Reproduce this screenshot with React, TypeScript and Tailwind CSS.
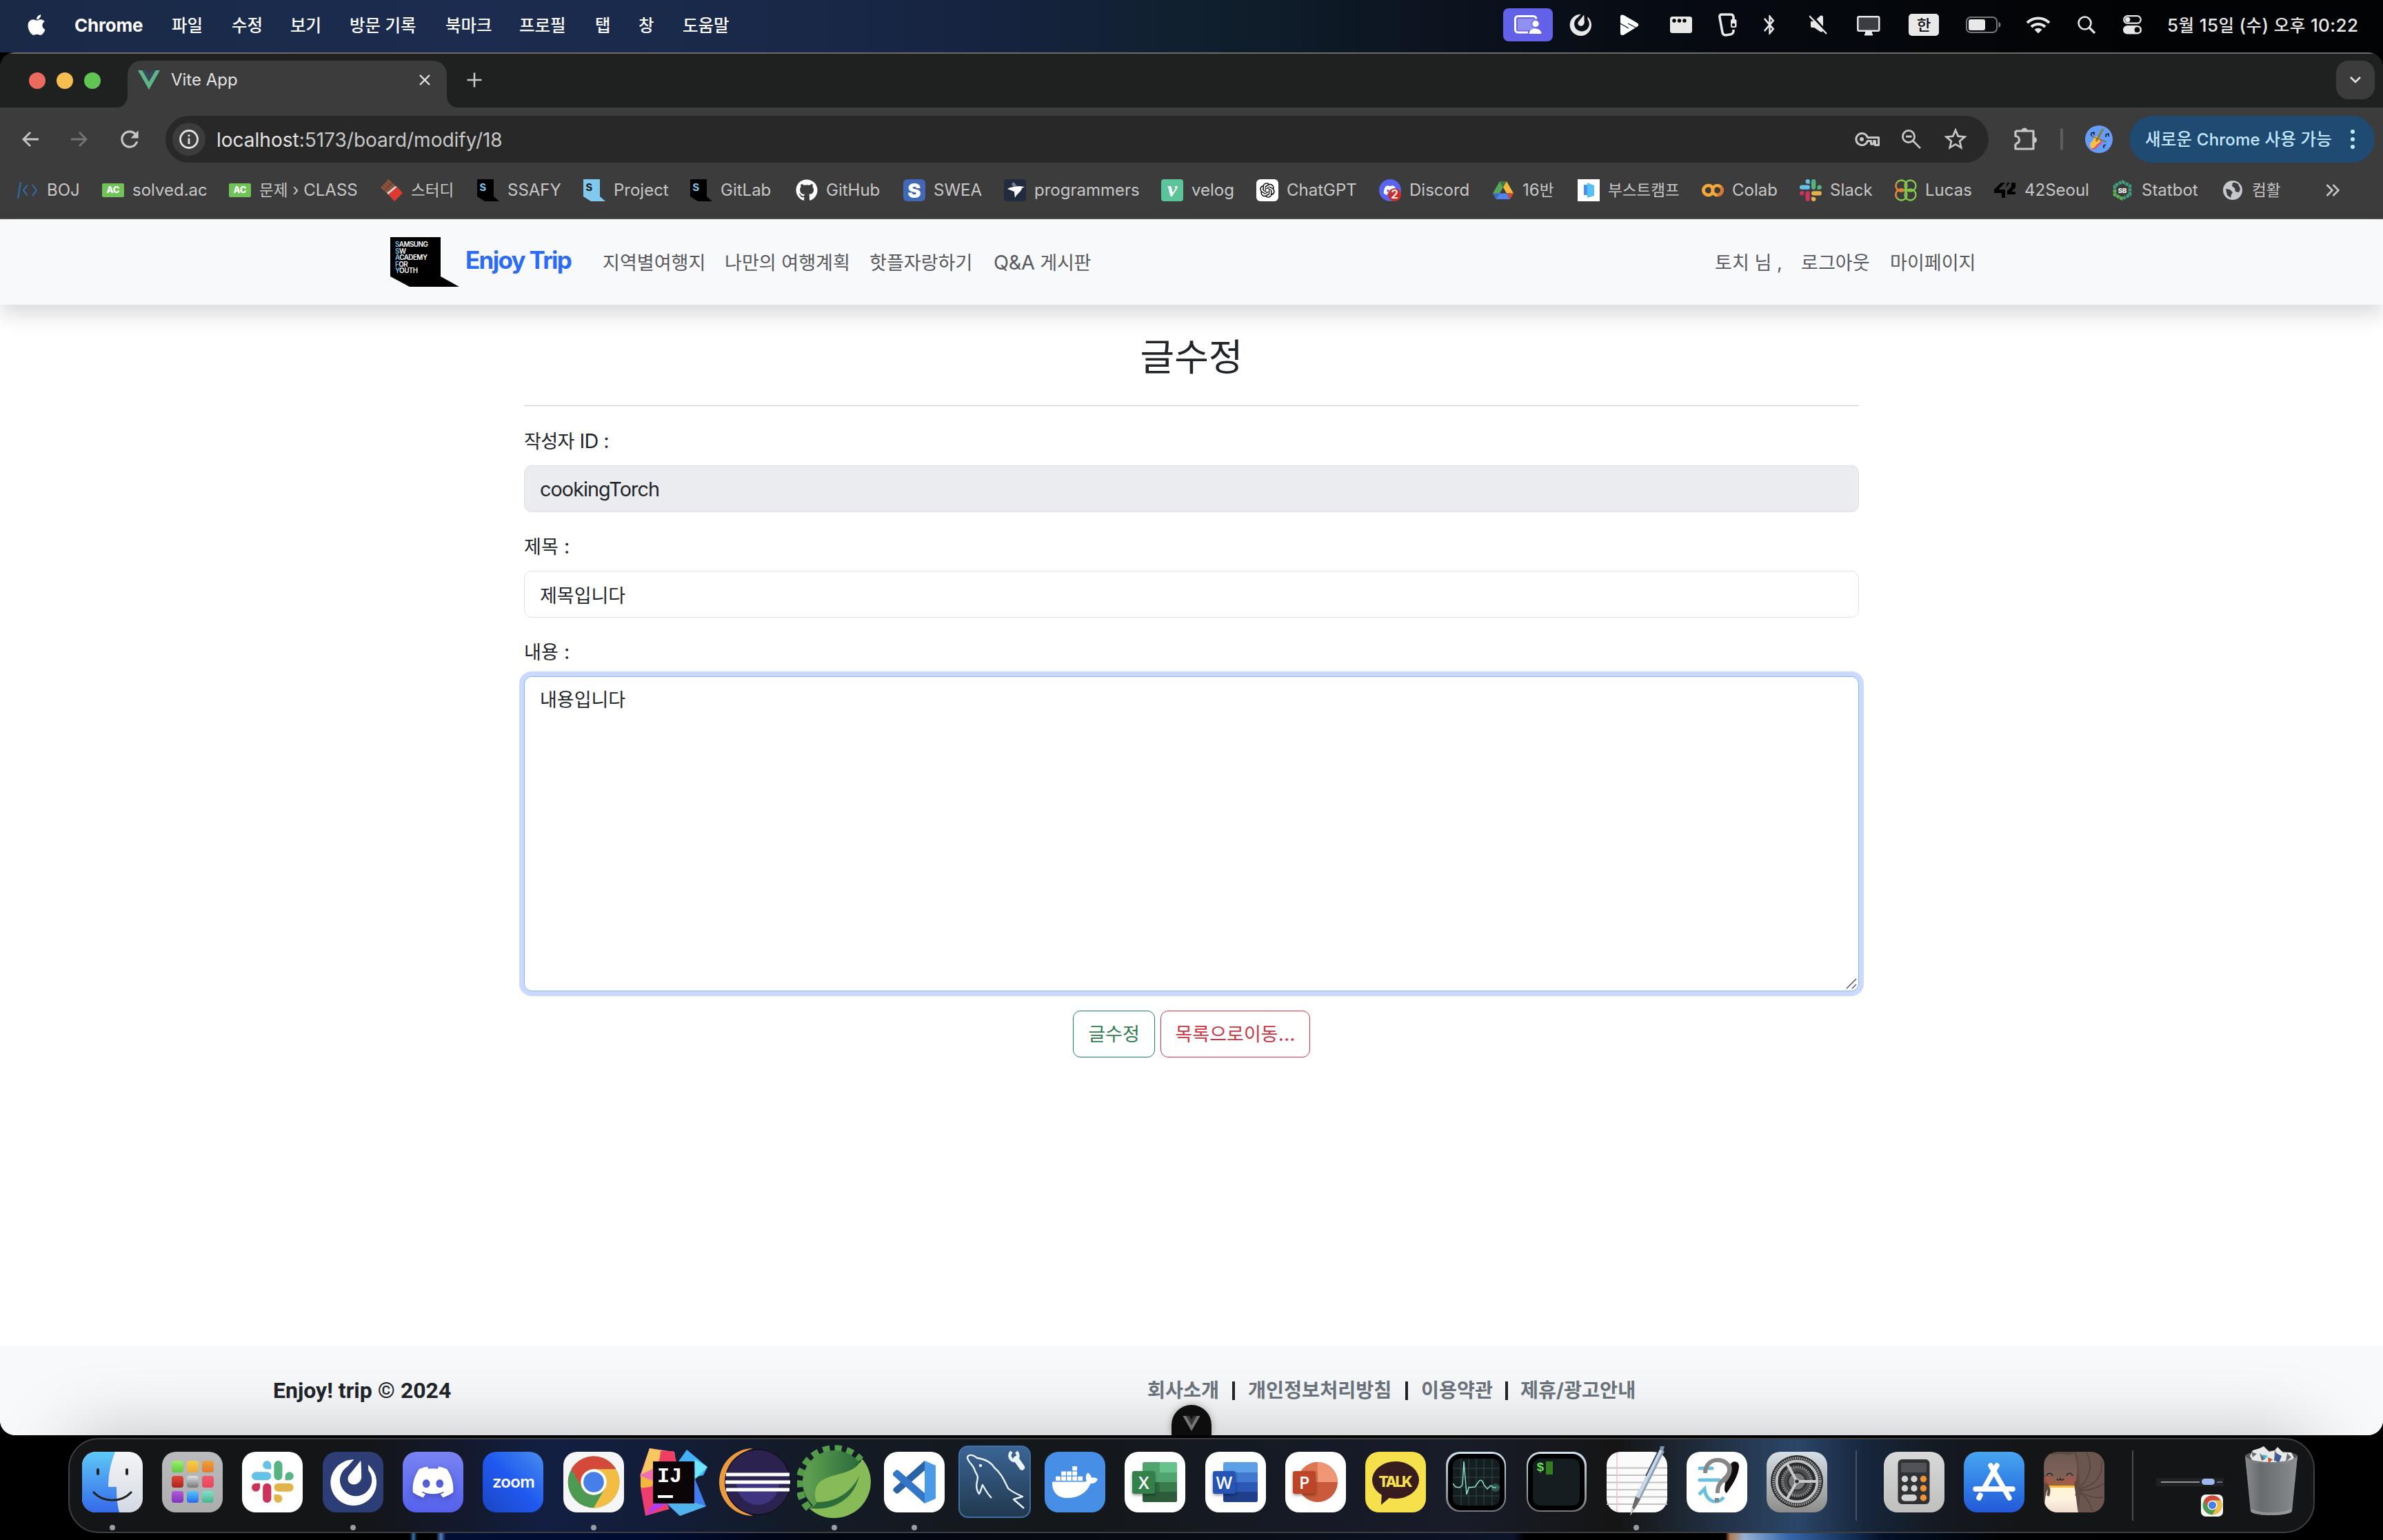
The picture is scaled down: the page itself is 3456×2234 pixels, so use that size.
import React from "react";
import type { ReactNode } from "react";
import { FaApple, FaDiscord, FaDocker, FaGithub } from "react-icons/fa6";
import { RiOpenaiFill } from "react-icons/ri";
import { MdBluetooth, MdStarBorder, MdRefresh } from "react-icons/md";

/* Korean text is set slightly smaller than the Latin text around it. */
function K({ children }: { children: ReactNode }) {
  return <span className="text-[0.94em]">{children}</span>;
}

/* ---------- shared logos ---------- */

function VueLogo({ className, outer, inner }: { className: string; outer: string; inner: string }) {
  return (
    <svg viewBox="0 0 32 28" className={className}>
      <path d="M0 0h6.4L16 16.6 25.6 0H32L16 28z" fill={outer} />
      <path d="M6.4 0h5.9L16 6.4 19.7 0h5.9L16 16.6z" fill={inner} />
    </svg>
  );
}

function SlackLogo({ className }: { className: string }) {
  return (
    <svg viewBox="0 0 54 54" className={className}>
      <path fill="#64c1e8" d="M19.7.1a5.4 5.4 0 0 0-5.4 5.4 5.4 5.4 0 0 0 5.4 5.3h5.4V5.5A5.4 5.4 0 0 0 19.7.1m0 14.3H5.4A5.4 5.4 0 0 0 0 19.8a5.4 5.4 0 0 0 5.4 5.3h14.3a5.4 5.4 0 0 0 5.4-5.3 5.4 5.4 0 0 0-5.4-5.4" />
      <path fill="#58b382" d="M53.8 19.8a5.4 5.4 0 0 0-5.4-5.4 5.4 5.4 0 0 0-5.4 5.4v5.3h5.4a5.4 5.4 0 0 0 5.4-5.3m-14.4 0V5.5A5.4 5.4 0 0 0 34 .1a5.4 5.4 0 0 0-5.3 5.4v14.3a5.4 5.4 0 0 0 5.3 5.3 5.4 5.4 0 0 0 5.4-5.3" />
      <path fill="#e1b34c" d="M34 54a5.4 5.4 0 0 0 5.4-5.4 5.4 5.4 0 0 0-5.4-5.3h-5.3v5.3A5.4 5.4 0 0 0 34 54m0-14.3h14.4a5.4 5.4 0 0 0 5.4-5.4 5.4 5.4 0 0 0-5.4-5.4H34a5.4 5.4 0 0 0-5.3 5.4 5.4 5.4 0 0 0 5.3 5.4" />
      <path fill="#cd325a" d="M0 34.3a5.4 5.4 0 0 0 5.4 5.4 5.4 5.4 0 0 0 5.3-5.4v-5.4H5.4A5.4 5.4 0 0 0 0 34.3m14.3 0v14.3a5.4 5.4 0 0 0 5.4 5.4 5.4 5.4 0 0 0 5.4-5.4V34.3a5.4 5.4 0 0 0-5.4-5.4 5.4 5.4 0 0 0-5.4 5.4" />
    </svg>
  );
}

function ChromeLogo({ className }: { className: string }) {
  return (
    <svg viewBox="0 0 100 100" className={className}>
      <circle cx="50" cy="50" r="48" fill="#4f9a52" />
      <path d="M8.4 26A48 48 0 0 1 91.6 26L50 26 29.2 62z" fill="#d4493a" />
      <path d="M91.6 26A48 48 0 0 1 50 98L70.8 62 50 26z" fill="#f2bd42" />
      <circle cx="50" cy="50" r="24" fill="#fff" />
      <circle cx="50" cy="50" r="19" fill="#467fea" />
    </svg>
  );
}

function Mattermost({ className, color }: { className: string; color: string }) {
  return (
    <svg viewBox="0 0 100 100" className={className} fill={color}>
      <path d="M52 2A49 49 0 1 0 82 13L83 25A34 34 0 1 1 38 17z" />
      <path d="M65 6C64 4 66 4 67 7L68 38C68 52 54 58 46 54 36 49 38 38 44 32z" />
    </svg>
  );
}

/* ---------- macOS menu bar ---------- */

function MenuBar() {
  return (
    <div className="flex h-[76px] shrink-0 items-center bg-[linear-gradient(90deg,#1a2946_0%,#1b2c50_20%,#192847_34%,#15233f_42%,#10202e_50%,#0c1420_60%,#070b12_70%,#020304_90%)] pb-[4px] pl-[40px] text-[26px] font-medium text-white">
      <div className="flex w-[2140px] items-center">
        <div className="w-[68px]"><FaApple className="-ml-1 h-[34px] w-[34px]" /></div>
        <div className="w-[141px] font-bold tracking-[-0.2px]">Chrome</div>
        <div className="w-[87px]"><K>파일</K></div>
        <div className="w-[85px]"><K>수정</K></div>
        <div className="w-[86px]"><K>보기</K></div>
        <div className="w-[139px]"><K>방문 기록</K></div>
        <div className="w-[107px]"><K>북마크</K></div>
        <div className="w-[110px]"><K>프로필</K></div>
        <div className="w-[63px]"><K>탭</K></div>
        <div className="w-[64px]"><K>창</K></div>
        <div><K>도움말</K></div>
      </div>
      <div className="flex items-center text-[#e8e8e8]">
        <div className="w-[96px]">
          <div className="flex h-[48px] w-[72px] items-center justify-center rounded-[8px] bg-[#6261e8]">
            <svg viewBox="0 0 40 28" className="h-[28px] w-[40px]">
              <rect x="5" y="5" width="26" height="17" fill="#918ff0" />
              <path d="M20 25H5.500a4 4 0 0 1-4-4V5.500a4 4 0 0 1 4-4H28a4 4 0 0 1 4 4" fill="none" stroke="#fff" strokeWidth="3" />
              <circle cx="31" cy="12.500" r="5.500" fill="#fff" stroke="#6261e8" strokeWidth="1.500" />
              <path d="M21.500 27c0-10 18-10 18 0z" fill="#fff" />
            </svg>
          </div>
        </div>
        <div className="w-[71px]"><Mattermost className="h-[32px] w-[32px]" color="#e8e8e8" /></div>
        <div className="w-[75px]">
          <svg viewBox="0 0 30 30" className="h-[30px] w-[30px]">
            <path d="M3 3c0-3 3-3 5-2l19 11c3 2 3 4 0 6L9 29c-3 2-6 1-6-2z" fill="#fff" />
            <path d="M-1 11l16 9M14 13l15 8" stroke="#0b101a" strokeWidth="1.200" />
          </svg>
        </div>
        <div className="w-[70px]">
          <svg viewBox="0 0 32 24" className="h-[24px] w-[32px]">
            <rect width="32" height="24" rx="3.500" fill="#e8e8e8" />
            <circle cx="6" cy="6" r="2.700" /><circle cx="13.500" cy="6" r="2.700" /><circle cx="21" cy="6" r="2.700" />
          </svg>
        </div>
        <div className="w-[60px]">
          <svg viewBox="0 0 28 34" className="h-[34px] w-[28px]">
            <path d="M22 9V6c0-3-2-4-4-4H5C3 2 1.500 3 2 6l4 22c.5 3 2 4 5 4l6-1c4-1 5-2 5-5v-2" fill="none" stroke="#e8e8e8" strokeWidth="3.600" />
            <rect x="18" y="9" width="8.500" height="12" rx="2" fill="#e8e8e8" />
            <circle cx="22" cy="17" r="2.300" fill="#06090e" />
          </svg>
        </div>
        <div className="w-[72px]"><MdBluetooth className="h-[34px] w-[29px]" preserveAspectRatio="none" /></div>
        <div className="w-[69px]">
          <svg viewBox="0 0 26 28" className="h-[28px] w-[26px]">
            <path d="M2 9h5l9-8c2-1 4 0 4 2v18c0 3-2 4-4 3l-9-6H4c-2 0-2-1-2-3z" fill="#e8e8e8" />
            <path d="M2-1l24 26" stroke="#06090e" strokeWidth="3" />
            <path d="M0 1l25 26" stroke="#e8e8e8" strokeWidth="2.300" />
          </svg>
        </div>
        <div className="w-[75px]">
          <svg viewBox="0 0 34 29" className="mt-[2px] h-[29px] w-[34px]">
            <rect x="1.300" y="1.300" width="31" height="20.500" rx="2" fill="#3b3d42" stroke="#e8e8e8" strokeWidth="2.500" />
            <path d="M12 23h10v3h1v2.500H11V26h1z" fill="#e8e8e8" />
          </svg>
        </div>
        <div className="w-[83px]">
          <div className="flex h-[32px] w-[44px] items-center justify-center rounded-[5px] bg-[#e8e8e8] text-[22px] leading-none text-[#07090c]">한</div>
        </div>
        <div className="w-[87px]">
          <svg viewBox="0 0 51 24" className="h-[24px] w-[51px]">
            <rect x="1" y="1" width="44" height="22" rx="6" fill="none" stroke="#77797c" strokeWidth="2" />
            <rect x="4" y="4" width="24" height="16" rx="3" fill="#e8e8e8" />
            <path d="M47.500 8c4 1 4 7 0 8z" fill="#77797c" />
          </svg>
        </div>
        <div className="w-[75px]">
          <svg viewBox="0 0 36 26" className="h-[26px] w-[36px]" fill="none" stroke="#e8e8e8" strokeWidth="4">
            <path d="M2 10a23 23 0 0 1 32 0" /><path d="M8 16a14.500 14.500 0 0 1 20 0" />
            <path d="M18 25.500l-5.500-5.500a8 8 0 0 1 11 0z" fill="#e8e8e8" stroke="none" />
          </svg>
        </div>
        <div className="w-[66px]">
          <svg viewBox="0 0 26 26" className="h-[26px] w-[26px]" fill="none" stroke="#e8e8e8" strokeWidth="2.600">
            <circle cx="10.500" cy="10.500" r="9" /><path d="M17 17l8 8" strokeWidth="3.200" />
          </svg>
        </div>
        <div className="w-[64px]">
          <svg viewBox="0 0 27 28" className="h-[28px] w-[27px]">
            <rect x="1.200" y="1.200" width="24.500" height="10.500" rx="5.250" fill="none" stroke="#e8e8e8" strokeWidth="2.200" />
            <circle cx="6.700" cy="6.400" r="3.600" fill="#e8e8e8" />
            <rect y="15" width="27" height="12.500" rx="6.250" fill="#e8e8e8" />
            <circle cx="20.500" cy="21.200" r="3.900" fill="#050608" />
          </svg>
        </div>
        <div className="tracking-[0.4px] whitespace-nowrap">5<K>월</K> 15<K>일</K> (<K>수</K>) <K>오후</K> 10:22</div>
      </div>
    </div>
  );
}

/* ---------- Chrome window ---------- */

function TabStrip() {
  return (
    <div className="flex h-[80px] shrink-0 border-t-2 border-[#6b6b6b] bg-[#1f2120]">
      <div className="flex w-[169px] items-center gap-[16px] pl-[42px]">
        <div className="h-[24px] w-[24px] rounded-full bg-[#ed6a5e]" />
        <div className="h-[24px] w-[24px] rounded-full bg-[#f4bf4f]" />
        <div className="h-[24px] w-[24px] rounded-full bg-[#61c554]" />
      </div>
      <div className="flex w-[495px] items-end pt-[10px]">
        <svg viewBox="0 0 16 16" className="h-[16px] w-[16px]"><path d="M16 0v16H0A16 16 0 0 0 16 0" fill="#3c3c3c" /></svg>
        <div className="flex h-[68px] w-[463px] items-center rounded-t-[20px] bg-[#3c3c3c] pb-[12px] pl-[15px] text-[24px] text-[#e3e3e3]">
          <VueLogo className="h-[28px] w-[32px]" outer="#5fb488" inner="#35495e" />
          <span className="ml-[16px] flex-1">Vite App</span>
          <svg viewBox="0 0 16 16" className="mr-[24px] h-[16px] w-[16px]" stroke="#e3e3e3" strokeWidth="2.400"><path d="M1 1l14 14M15 1L1 15" /></svg>
        </div>
        <svg viewBox="0 0 16 16" className="h-[16px] w-[16px]"><path d="M0 0v16h16A16 16 0 0 1 0 0" fill="#3c3c3c" /></svg>
      </div>
      <div className="flex flex-1 items-center pb-[2px] pl-[13px]">
        <svg viewBox="0 0 22 22" className="h-[22px] w-[22px]" stroke="#c7c7c7" strokeWidth="2.600"><path d="M11 0.500v21M0.500 11h21" /></svg>
      </div>
      <div className="mt-[10px] mr-[12px] flex h-[56px] w-[56px] items-center justify-center rounded-[18px] bg-[#3c3c3c]">
        <svg viewBox="0 0 16 10" className="h-[10px] w-[16px]" fill="none" stroke="#e3e3e3" strokeWidth="2.600"><path d="M1 1l7 7 7-7" /></svg>
      </div>
    </div>
  );
}

function Toolbar() {
  return (
    <div className="flex h-[92px] shrink-0 items-center pl-[32px] text-[#c7c7c7]">
      <svg viewBox="0 0 24 22" className="h-[22px] w-[24px]" fill="none" stroke="#c7c7c7" strokeWidth="2.800"><path d="M24 11H2M12 1L2 11l10 10" /></svg>
      <svg viewBox="0 0 24 22" className="ml-[47px] h-[22px] w-[24px]" fill="none" stroke="#757575" strokeWidth="2.800"><path d="M0 11h22M12 1l10 10-10 10" /></svg>
      <MdRefresh className="ml-[42px] h-[38px] w-[38px]" />
      <div className="ml-[33px] flex h-[68px] w-[2644px] items-center rounded-full bg-[#282828] pl-[10px]">
        <div className="flex h-[48px] w-[48px] items-center justify-center rounded-full bg-[#3c3c3c]">
          <svg viewBox="0 0 28 28" className="h-[28px] w-[28px]">
            <circle cx="14" cy="14" r="12.500" fill="none" stroke="#e3e3e3" strokeWidth="2.800" />
            <path d="M12.600 12.500h2.800V21h-2.800zM12.600 7.300h2.800v2.800h-2.800z" fill="#e3e3e3" />
          </svg>
        </div>
        <div className="ml-[16px] flex-1 pt-px text-[28px]"><span className="text-[#e3e3e3]">localhost</span>:5173/board/modify/18</div>
        <svg viewBox="0 0 36 20" className="h-[20px] w-[36px]" fill="none" stroke="#c7c7c7" strokeWidth="3">
          <path d="M18.500 7.500A8.500 8.500 0 1 0 18.500 12.500H23.500V17H27.500V12.500H29.500V18.500H34.500V7.500z" strokeLinejoin="round" /><circle cx="10" cy="10" r="3" fill="#c7c7c7" stroke="none" />
        </svg>
        <svg viewBox="0 0 28 28" className="ml-[32px] h-[28px] w-[28px]" fill="none" stroke="#c7c7c7" strokeWidth="2.800">
          <circle cx="10" cy="10" r="8.600" /><path d="M16.500 16.500l10.500 10.500M6 10h8.500" />
        </svg>
        <MdStarBorder className="mr-[28px] ml-[30px] h-[40px] w-[40px]" />
      </div>
      <svg viewBox="0 0 34 34" className="ml-[37px] h-[34px] w-[34px]">
        <path d="M2 5H28V31H2V23.500M2 5V12.500A5.500 5.500 0 0 1 2 23.500" fill="none" stroke="#c7c7c7" strokeWidth="3.200" strokeLinejoin="round" />
        <path d="M10.500 5a4.600 4.600 0 0 1 9.200 0zM28.500 13.500a4.600 4.600 0 0 1 0 9.200z" fill="#c7c7c7" />
      </svg>
      <div className="ml-[33px] h-[32px] w-[4px] rounded bg-[#5e5e5e]" />
      <svg viewBox="0 0 40 40" className="ml-[32px] h-[40px] w-[40px]">
        <circle cx="20" cy="20" r="20" fill="#669df6" />
        <path d="M9 33c-4-5 1-8 3-10s1-6 5-6 8 5 7 8-4 3-6 6-5 6-9 2z" fill="#e0506a" />
        <path d="M8 32c-3-5 1-8 3-10s1-6 5-6 7 4 6 7-4 3-6 6-5 6-8 3z" fill="#f3c14b" />
        <path d="M16 23L26 5" stroke="#9a7420" strokeWidth="2.600" />
        <path d="M8 15l23 9" stroke="#6c5a30" strokeWidth="1.200" />
        <path d="M9 15v-4l4-1v4M30 17v-4l4-1v4M27 33v-4l3-1" stroke="#10182c" strokeWidth="1.500" fill="none" />
      </svg>
      <div className="ml-[24px] flex h-[68px] w-[356px] items-center rounded-full bg-[#1f4a72] pl-[23px] text-[24px] font-medium text-[#c2e7ff]">
        <span className="w-[298px] tracking-[0.2px] whitespace-nowrap"><span className="text-[24.5px]">새로운</span> Chrome <span className="text-[24.5px]">사용 가능</span></span>
        <svg viewBox="0 0 6 28" className="h-[28px] w-[6px]" fill="#c2e7ff"><circle cx="3" cy="3" r="3" /><circle cx="3" cy="14" r="3" /><circle cx="3" cy="25" r="3" /></svg>
      </div>
    </div>
  );
}

function Bookmark({ width, icon, children }: { width: string; icon: ReactNode; children: ReactNode }) {
  return (
    <div className={`flex shrink-0 items-center gap-[12px] whitespace-nowrap ${width}`}>
      <span className="flex h-[32px] w-[32px] shrink-0 items-center justify-center">{icon}</span>
      <span>{children}</span>
    </div>
  );
}

function SFlag({ fill, ink }: { fill: string; ink: string }) {
  return (
    <svg viewBox="0 0 32 32" className="h-[32px] w-[32px]">
      <path d="M0 0h24v25l8 7H11L0 25z" fill={fill} />
      <text x="3.500" y="17" fontFamily="Liberation Mono" fontSize="16" fontWeight="700" fill={ink}>S</text>
    </svg>
  );
}

function SolvedIcon() {
  return <span className="flex h-[20px] w-[32px] items-center justify-center rounded-[2px] bg-[#72c25a] text-[13px] font-extrabold text-white">AC</span>;
}

function BookmarksBar() {
  return (
    <div className="flex h-[70px] shrink-0 items-center border-b-2 border-[#4b4b4b] pb-[12px] pl-[24px] text-[24px] text-[#c7c7c7]">
      <Bookmark width="w-[124px]" icon={
        <svg viewBox="0 0 32 28" className="h-[28px] w-[32px]" fill="none" stroke="#2f6db5" strokeWidth="2"><path d="M6 2L2 26M16 6l-6 8 6 8M23 6l6 8-6 8" /></svg>
      }>BOJ</Bookmark>
      <Bookmark width="w-[184px]" icon={<SolvedIcon />}>solved.ac</Bookmark>
      <Bookmark width="w-[220px]" icon={<SolvedIcon />}><K>문제</K> › CLASS</Bookmark>
      <Bookmark width="w-[140px]" icon={
        <svg viewBox="0 0 32 32" className="h-[32px] w-[32px]">
          <path d="M11 0L0 12l10 9L22 10z" fill="#8c5641" />
          <path d="M5.500 6l11 9.500M3 9l10.500 9M8 3l11 9M5 17L17 5" stroke="#5f3426" strokeWidth="1" />
          <path d="M9 20L21 10l3 1L12 23z" fill="#d8d8d8" />
          <path d="M11 22L24 11l8 9L20 32z" fill="#dc3a30" />
        </svg>
      }><K>스터디</K></Bookmark>
      <Bookmark width="w-[154px]" icon={<SFlag fill="#000" ink="#7fc9ee" />}>SSAFY</Bookmark>
      <Bookmark width="w-[155px]" icon={<SFlag fill="#82c9ee" ink="#111" />}>Project</Bookmark>
      <Bookmark width="w-[153px]" icon={<SFlag fill="#000" ink="#7fc9ee" />}>GitLab</Bookmark>
      <Bookmark width="w-[156px]" icon={<FaGithub className="h-[32px] w-[32px] text-white" />}>GitHub</Bookmark>
      <Bookmark width="w-[146px]" icon={
        <span className="flex h-[32px] w-[32px] items-center justify-center rounded-[6px] bg-[#4169b8] text-[29px] leading-none font-black text-white">S</span>
      }>SWEA</Bookmark>
      <Bookmark width="w-[228px]" icon={
        <svg viewBox="0 0 32 32" className="h-[32px] w-[32px]">
          <rect width="32" height="32" rx="4" fill="#212b3d" />
          <path d="M11 7l3-3 6 7-5 2z" fill="#73809a" />
          <path d="M5 14c4-3 12-3 17-4l8 1-4 2c-1 6-6 6-10 14l-1-9z" fill="#fff" />
        </svg>
      }>programmers</Bookmark>
      <Bookmark width="w-[138px]" icon={
        <span className="flex h-[32px] w-[32px] items-center justify-center rounded-[4px] bg-[#5cc39a] pb-[4px] font-['Liberation_Serif'] text-[32px] leading-none font-bold text-white italic">v</span>
      }>velog</Bookmark>
      <Bookmark width="w-[178px]" icon={
        <span className="flex h-[32px] w-[32px] items-center justify-center rounded-[6px] bg-white"><RiOpenaiFill className="h-[26px] w-[26px] text-black" /></span>
      }>ChatGPT</Bookmark>
      <Bookmark width="w-[164px]" icon={
        <span className="relative flex h-[32px] w-[32px] items-center justify-center rounded-full bg-[#5865f2]">
          <FaDiscord className="h-[20px] w-[20px] text-white" />
          <span className="absolute right-0 bottom-0 flex h-[19px] w-[19px] items-center justify-center rounded-full bg-[#c9302c] text-[17px] leading-none font-semibold text-white">2</span>
        </span>
      }>Discord</Bookmark>
      <Bookmark width="w-[124px]" icon={
        <svg viewBox="0 0 30 26" className="h-[26px] w-[30px]">
          <path d="M10 0L0 17.500 5 26 15 8.700z" fill="#58a65c" /><path d="M10 0h10l-5 8.700z" fill="#397d3f" />
          <path d="M20 0l10 17.500H20L15 8.700z" fill="#f2b93b" /><path d="M5 26l5-8.500h10L25 26z" fill="#5083ee" />
          <path d="M0 17.500h10L5 26z" fill="#3f68cf" /><path d="M20 17.500h10L25 26z" fill="#dc4437" />
        </svg>
      }>16<K>반</K></Bookmark>
      <Bookmark width="w-[180px]" icon={
        <svg viewBox="0 0 32 32" className="h-[32px] w-[32px]"><path d="M0 0h32v32H0z" fill="#fff" /><path d="M9 8h8v15H9z" fill="#4a90f5" /><path d="M14 5l10 4v15l-10 3z" fill="#55c1f7" /></svg>
      }><K>부스트캠프</K></Bookmark>
      <Bookmark width="w-[142px]" icon={
        <svg viewBox="0 0 32 20" className="h-[20px] w-[32px]" fill="none" strokeWidth="4.600">
          <circle cx="9.500" cy="10" r="7" stroke="#d9782c" /><path d="M15.500 6.400A7 7 0 1 0 15.500 13.600" stroke="#f2a93b" />
          <circle cx="22.500" cy="10" r="7" stroke="#f2a93b" /><path d="M22.500 17A7 7 0 0 0 27.500 5" stroke="#d9782c" />
        </svg>
      }>Colab</Bookmark>
      <Bookmark width="w-[138px]" icon={<SlackLogo className="h-[32px] w-[32px]" />}>Slack</Bookmark>
      <Bookmark width="w-[144px]" icon={
        <svg viewBox="0 0 32 32" className="h-[32px] w-[32px]" fill="none" stroke="#84ca4b" strokeWidth="2.300">
          <circle cx="9.500" cy="9.500" r="8" /><circle cx="22.500" cy="9.500" r="8" /><circle cx="9.500" cy="22.500" r="8" /><circle cx="22.500" cy="22.500" r="8" />
          <path d="M3 5a8 8 0 0 0 6.500 12.500c4 0 4-3 0-3A8 8 0 0 0 3 27.500" stroke="#e8793a" />
        </svg>
      }>Lucas</Bookmark>
      <Bookmark width="w-[170px]" icon={
        <svg viewBox="0 0 32 22" className="h-[22px] w-[32px]"><path d="M10 0h6L6 10h10v12h-5v-7H0v-5zM19 0l-2 7 6-7zM25 0h6v7l-6 6h6v4H19v-5l6-6z" fill="#000" /></svg>
      }>42Seoul</Bookmark>
      <Bookmark width="w-[160px]" icon={
        <svg viewBox="0 0 28 30" className="h-[30px] w-[28px]">
          <path d="M14 2.500l11 6v13l-11 6-11-6v-13z" fill="none" stroke="#3f9e80" strokeWidth="4.500" strokeDasharray="4.400 1" />
          <path d="M3 14v7.500l11 6" fill="none" stroke="#63b04f" strokeWidth="4.500" strokeDasharray="4.400 1" />
          <text x="14" y="18.500" textAnchor="middle" fontFamily="Inter" fontSize="9.500" fontWeight="800" fill="#fff">SB</text>
        </svg>
      }>Statbot</Bookmark>
      <Bookmark width="w-[151px]" icon={
        <svg viewBox="0 0 28 28" className="h-[28px] w-[28px]"><circle cx="14" cy="14" r="14" fill="#c4c7cc" /><path d="M4 12l6 1 4 4-2 3-1 5-5-4zM14 3l-1 5 4 3 1 5 5 1 2-5-3-7-4-2z" fill="#3c3c3c" /></svg>
      }><K>컴활</K></Bookmark>
      <svg viewBox="0 0 20 18" className="h-[18px] w-[20px]" fill="none" stroke="#c7c7c7" strokeWidth="2.600"><path d="M1.500 1l8 8-8 8M10.500 1l8 8-8 8" /></svg>
    </div>
  );
}

/* ---------- the web page ---------- */

function SiteHeader() {
  return (
    <header className="relative flex h-[124px] shrink-0 items-center bg-[#f8f9fb] pl-[566px] text-[28.8px] text-[#57595e] shadow-[0_14px_29px_rgba(0,0,0,0.15)]">
      <svg viewBox="0 0 100 72" className="h-[72px] w-[100px]">
        <path d="M0 0h73v57l27 15H28L0 57z" fill="#000" />
        <g fontFamily="Inter" fontSize="9.800" fontWeight="600" fill="#fff" letterSpacing="-0.500">
          <text x="7" y="14"><tspan fill="#7fc9ee">S</tspan>AMSUNG</text>
          <text x="7" y="23.500"><tspan fill="#7fc9ee">S</tspan>W</text>
          <text x="7" y="33"><tspan fill="#7fc9ee">A</tspan>CADEMY</text>
          <text x="7" y="42.500"><tspan fill="#7fc9ee">F</tspan>OR</text>
          <text x="7" y="52"><tspan fill="#7fc9ee">Y</tspan>OUTH</text>
        </g>
      </svg>
      <div className="ml-[9px] w-[199px] pb-[5px] text-[35px] font-bold tracking-[-1.700px] text-[#2b6bf6]">Enjoy Trip</div>
      <nav className="flex flex-1 pt-[2px]">
        <a className="w-[177px]"><K>지역별여행지</K></a>
        <a className="w-[210px]"><K>나만의 여행계획</K></a>
        <a className="w-[180px]"><K>핫플자랑하기</K></a>
        <a className="tracking-[-0.300px]">Q&amp;A <K>게시판</K></a>
      </nav>
      <nav className="flex w-[969px] pt-[2px]">
        <span className="w-[125px]"><K>토치 님 ,</K></span>
        <a className="w-[129px]"><K>로그아웃</K></a>
        <a><K>마이페이지</K></a>
      </nav>
    </header>
  );
}

function ModifyForm() {
  return (
    <main className="mx-auto flex w-[1936px] flex-1 flex-col text-[28.8px] text-[#212529]">
      <h2 className="mt-[44px] h-[65px] text-center text-[54px] leading-[65px] font-normal">글수정</h2>
      <hr className="mt-[37px] mb-px h-px border-0 bg-[#c8c9ca]" />
      <label className="mt-[28px] h-[43px] leading-[44px] tracking-[-0.600px]"><K>작성자</K> ID :</label>
      <input readOnly value="cookingTorch" className="mt-[14px] h-[68px] rounded-[11px] border border-[#dee2e6] bg-[#ebecf0] px-[22px] tracking-[-0.950px]" />
      <label className="mt-[28px] h-[43px] leading-[44px]"><K>제목</K> :</label>
      <input readOnly value="제목입니다" className="mt-[14px] h-[68px] rounded-[11px] border border-[#dee2e6] bg-white px-[22px] text-[27px]" />
      <label className="mt-[28px] h-[43px] leading-[44px]"><K>내용</K> :</label>
      <div className="relative mt-[14px] h-[457px]">
        <textarea readOnly value="내용입니다" className="block h-full w-full resize-none rounded-[11px] border border-[#86b7fe] bg-white px-[22px] pt-[12px] text-[27px] leading-[43px] shadow-[0_0_0_7px_#cad9fd]" />
        <svg viewBox="0 0 16 16" className="absolute right-[3px] bottom-[3px] h-[16px] w-[16px]" stroke="#555" strokeWidth="1.500"><path d="M1 15L15 1M9 15l6-6" /></svg>
      </div>
      <div className="mt-[28px] flex justify-center gap-[8px]">
        <button className="h-[68px] w-[119px] rounded-[11px] border border-[#198754] text-[#2f7d50]"><K>글수정</K></button>
        <button className="h-[68px] w-[217px] rounded-[11px] border border-[#dc3545] whitespace-nowrap text-[#d0343f]"><K>목록으로이동</K>...</button>
      </div>
    </main>
  );
}

function SiteFooter() {
  return (
    <footer className="relative flex h-[130px] shrink-0 items-center bg-[#f8f9fb] pl-[396px] text-[28.300px] font-bold text-[#6c757d]">
      <div className="w-[1268px] font-['Roboto'] text-[32px] text-[#212529]">Enjoy! trip © 2024</div>
      <span className="w-[123px]">회사소개</span>
      <i className="mr-[19px] h-[27px] w-[4px] bg-[#212529]" />
      <span className="w-[228px]">개인정보처리방침</span>
      <i className="mr-[19px] h-[27px] w-[4px] bg-[#212529]" />
      <span className="w-[122px]">이용약관</span>
      <i className="mr-[18px] h-[27px] w-[4px] bg-[#212529]" />
      <span>제휴/광고안내</span>
      <div className="absolute bottom-0 left-[1699px] flex h-[44px] w-[58px] justify-center rounded-t-[29px] bg-[#0f0f0f] pt-[16px] shadow-[0_0_12px_rgba(0,0,0,0.3)]">
        <VueLogo className="h-[22px] w-[26px]" outer="#808080" inner="#3c3c3c" />
      </div>
    </footer>
  );
}

/* ---------- dock ---------- */

function Tile({ className, children }: { className: string; children?: ReactNode }) {
  return <div className={`flex h-[88px] w-[88px] items-center justify-center overflow-hidden rounded-[20px] ${className}`}>{children}</div>;
}

function Slot({ running, children }: { running?: boolean; children: ReactNode }) {
  return (
    <div className="relative flex h-full w-[116.360px] shrink-0 items-center justify-center pb-[11px]">
      {children}
      {running && <span className="absolute bottom-[2px] left-[54px] h-[8px] w-[8px] rounded-full bg-[#9a9ca3]" />}
    </div>
  );
}

function Finder() {
  return (
    <svg viewBox="0 0 88 88" className="h-full w-full">
      <defs>
        <linearGradient id="finderBlue" x2="0" y2="1"><stop stopColor="#5ec8f7" /><stop offset="1" stopColor="#3569ea" /></linearGradient>
        <linearGradient id="finderWhite" x2="0" y2="1"><stop stopColor="#f5f5f7" /><stop offset="1" stopColor="#d3d9e4" /></linearGradient>
      </defs>
      <path d="M0 0h88v88H0z" fill="url(#finderWhite)" />
      <path d="M0 0h48C41 18 38 34 38 51h12c0 14 1 26 4 37H0z" fill="url(#finderBlue)" />
      <path d="M23 26v6M65 26v6" stroke="#222" strokeWidth="4" strokeLinecap="round" />
      <path d="M17 59c14 15 40 15 54 0" fill="none" stroke="#222" strokeWidth="3.200" strokeLinecap="round" />
    </svg>
  );
}

function Launchpad() {
  const cells = [
    "from-[#9af06a] to-[#5fc93f]", "from-[#f6cf45] to-[#efa93a]", "from-[#f0a139] to-[#e07a30]",
    "from-[#e2483a] to-[#a9251b]", "from-[#dfe1e3] to-[#777]", "from-[#ef5a6e] to-[#e6475b]",
    "from-[#b457dc] to-[#7b36b8]", "from-[#54c6f8] to-[#2d67ea]", "from-[#7fe0cd] to-[#4bb287]",
  ];
  return (
    <div className="grid grid-cols-3 gap-[5px]">
      {cells.map((c) => <div key={c} className={`h-[17px] w-[17px] rounded-[4px] bg-linear-to-b ${c}`} />)}
    </div>
  );
}

function IntelliJ() {
  return (
    <svg viewBox="0 0 98 98" className="h-[98px] w-[98px]">
      <path d="M14 0l36 5 8 50-40 5L0 40z" fill="#f06fb0" /><path d="M14 0l18 3-8 24L2 38z" fill="#f7c860" /><path d="M30 4h18l10 30-30-8z" fill="#ee3f63" />
      <path d="M68 2l30 25-6 12-40 10 4-30z" fill="#45b0f5" /><path d="M98 27L78 40l18 44-38 14-22-20 40-48z" fill="#3f7df0" />
      <path d="M80 16l18 11-18 18z" fill="#6fe6fb" /><path d="M1 40l20 8-12 20-8-12z" fill="#f4b63f" /><path d="M1 58l26-4 16 34-35 10z" fill="#ee3d6f" />
      <path d="M8 98l28-16 8-8-20 0z" fill="#b13cf0" /><path d="M40 80l18-8 38 12-38 14z" fill="#4fb4ec" />
      <path d="M19 19h60v61H19z" fill="#0b0507" />
      <text x="25" y="49" fontFamily="Liberation Mono" fontSize="30" fontWeight="700" fill="#fff">IJ</text>
      <path d="M26 68h22v4H26z" fill="#fff" />
    </svg>
  );
}

function Eclipse() {
  return (
    <svg viewBox="0 0 107 98" className="h-[98px] w-[107px]">
      <path d="M52 0A49 49 0 0 0 52 98C25 88 14 70 14 49S25 10 52 0z" fill="#ea9a3f" />
      <circle cx="59" cy="49" r="48" fill="#10101a" /><circle cx="59" cy="49" r="46.500" fill="#2b2250" />
      <path d="M28 60a31 31 0 0 0 62 0z" fill="#453a8c" opacity=".8" transform="translate(0 -9)" />
      <path d="M13 35.500h92v5H13zM12 46.500h94v5H12zM13 57.500h92v5H13z" fill="#fff" />
    </svg>
  );
}

function Spring() {
  return (
    <svg viewBox="0 0 108 108" className="h-[108px] w-[108px]">
      <defs><linearGradient id="springDark"><stop offset=".1" stopColor="#5d9e50" /><stop offset=".9" stopColor="#2a6a3c" /></linearGradient></defs>
      <path d="M17 92A49 49 0 1 1 92 22" fill="none" stroke="#549a4b" strokeWidth="11" strokeDasharray="10 7" />
      <circle cx="54" cy="54" r="46" fill="url(#springDark)" />
      <path d="M94 20C82 50 36 36 27 64c-2 8-1 15 2 19l-11 9A53 53 0 0 0 107 54C107 41 102 29 94 20z" fill="#87bb57" />
      <path d="M29 83C55 84 80 68 90 45 92 78 60 98 18 92c3-1 8-5 11-9z" fill="#2c6d39" />
      <path d="M18 92c8 1 18 1 26-1 22-5 40-20 46-46 6 30-10 55-38 61-14 0-26-6-34-14z" fill="#87bb57" />
    </svg>
  );
}

function VsCode() {
  return (
    <svg viewBox="0 0 62 62" className="h-[62px] w-[62px]">
      <path d="M0 43l4 4c1 1 2 1 4 0l38-33V0L1 40z" fill="#2a62a6" />
      <path d="M0 18l4-4c1-1 2-1 4 0l38 33v15L0 21z" fill="#3376c8" />
      <path d="M46 0l16 7v48l-16 7z" fill="#4a9ae8" />
    </svg>
  );
}

function MySql() {
  return (
    <div className="h-[105px] w-[105px] rounded-[14px] border-2 border-[#3f6fa5] bg-linear-to-b from-[#3b6594] to-[#22394f]">
      <svg viewBox="2 2 101 101" className="h-full w-full" fill="none" stroke="#e9f4fc" strokeWidth="2.400" strokeLinejoin="round">
        <path d="M95 91L80 78l13-4C84 70 76 66 72 62 66 50 62 40 52 32 46 22 34 19 27 18 20 12 13 13 13 18c2 7 8 10 10 16 2 8 7 8 4 18-2 8 0 14 3 18 2-2 3-8 5-13 3 5 6 12 13 19" />
        <circle cx="32" cy="29" r="1" />
        <path d="M82 21l12 9" strokeWidth="8" strokeLinecap="round" transform="rotate(18 88 25)" />
        <path d="M77 9c-5 5-2 12 4 13 6-1 7-8 3-13" strokeWidth="4.500" />
      </svg>
    </div>
  );
}

function OfficeMark({ letter, badge, children }: { letter: string; badge: string; children: ReactNode }) {
  return (
    <div className="relative h-[58px] w-[66px]">
      {children}
      <span className={`absolute top-[13px] left-0 flex h-[33px] w-[33px] items-center justify-center rounded-[3px] font-['Open_Sans'] text-[25px] leading-none font-semibold text-white shadow-[0_2px_4px_rgba(0,0,0,0.4)] ${badge}`}>{letter}</span>
    </div>
  );
}

function Screen({ children }: { children: ReactNode }) {
  return (
    <div className="flex h-[87px] w-[87px] items-center justify-center rounded-[20px] bg-linear-to-b from-[#cfe3ee] to-[#77797b] p-[2.500px]">
      <div className="flex h-full w-full items-center justify-center rounded-[18px] bg-black">
        <div className="h-[68px] w-[68px] overflow-hidden rounded-[10px] bg-[#141d1f]">{children}</div>
      </div>
    </div>
  );
}

function TextEdit() {
  return (
    <svg viewBox="0 0 88 104" className="h-[104px] w-[88px]">
      <rect y="8" width="88" height="88" rx="20" fill="#fbfbfb" />
      <path d="M0 31.500h88M0 42h88M0 52.500h88M0 63h88M0 73.500h88M0 84h88" stroke="#c2c2c2" strokeWidth="1.800" />
      <path d="M15 9v86" stroke="#f3c0bd" strokeWidth="1.500" />
      <path d="M77 5l7 2-35 70-9 15-5 8 2-11 5-16z" fill="#8fa0b4" />
      <path d="M77 5l4 1-34 69-5-2z" fill="#c7d8e8" />
      <path d="M78-1l6 1-2 7-5-2z" fill="#7d95b5" />
      <path d="M74 9L57 43" stroke="#3e5068" strokeWidth="2" />
      <path d="M42 73l7 4-9 15-3-3z" fill="#6c6866" /><path d="M37 89l3 3-6 9z" fill="#c9c9c9" />
    </svg>
  );
}

function HelpPen() {
  return (
    <svg viewBox="0 0 88 88" className="h-full w-full" fill="none">
      <path d="M19 24h18M19 41h28" stroke="#6bbfdc" strokeWidth="5" strokeLinecap="round" />
      <path d="M18 62l8-8c2 18 18 24 28 12" stroke="#6bbfdc" strokeWidth="5" />
      <path d="M27 31C27 5 62 8 62 26c0 14-18 14-17 34M44 67v6" stroke="#868686" strokeWidth="6" />
      <path d="M63 20c3-9 14-7 13 2-1 12-8 24-18 38-4-2-3-8-2-14 3-6 5-16 7-26z" fill="#120c0d" />
      <path d="M62 18c4 10-2 20-8 26" stroke="#868686" strokeWidth="5" />
    </svg>
  );
}

function Gear() {
  return (
    <svg viewBox="0 0 88 88" className="h-full w-full" fill="none">
      <circle cx="44" cy="43" r="38" fill="#2b2c2e" /><circle cx="44" cy="43" r="34" stroke="#9c9e9f" strokeWidth="3.500" strokeDasharray="1.800 1.400" />
      <circle cx="44" cy="43" r="29.500" stroke="#bfc1c2" strokeWidth="4" /><circle cx="44" cy="43" r="21" fill="#4c4e50" stroke="#8b8d8e" strokeWidth="4" strokeDasharray="1.800 1.400" />
      <circle cx="44" cy="43" r="13" fill="#77797a" stroke="#333436" strokeWidth="3" />
      <path d="M44 43h29M44 43L30 18M44 43L30 68" stroke="#c9cbcc" strokeWidth="4" /><circle cx="44" cy="43" r="3.500" fill="#2d2e30" stroke="#c9cbcc" strokeWidth="1.500" />
    </svg>
  );
}

function Calculator() {
  const keys = ["#d2d3d3", "#d2d3d3", "#f09433"];
  return (
    <svg viewBox="0 0 88 88" className="h-full w-full">
      <rect x="20.500" y="11" width="46" height="65" rx="6" fill="#303236" /><rect x="25" y="16" width="37" height="14" rx="2" fill="#515357" />
      {[39.500, 53].map((y) => keys.map((k, i) => <circle key={`${y}-${i}`} cx={30.500 + i * 13.500} cy={y} r="4.700" fill={k} />))}
      <rect x="25.500" y="62" width="22.500" height="9.500" rx="4.700" fill="#d2d3d3" /><circle cx="57.500" cy="66.700" r="4.700" fill="#f09433" />
    </svg>
  );
}

function Squirrel() {
  return (
    <svg viewBox="0 0 88 88" className="h-full w-full">
      <defs>
        <linearGradient id="belly" x2="0" y2="1"><stop stopColor="#fff6cf" /><stop offset=".5" stopColor="#fdf3e0" /><stop offset="1" stopColor="#f0dccb" /></linearGradient>
        <linearGradient id="face" x2="0" y2="1"><stop stopColor="#6e5a53" /><stop offset=".7" stopColor="#7e6258" /><stop offset="1" stopColor="#a5613f" /></linearGradient>
      </defs>
      <path d="M0 0h88v88H0z" fill="#5f4a44" />
      <path d="M48 0h30c8 4 10 12 10 20v48c-2 12-8 18-14 20H50C56 60 50 30 48 0z" fill="#6b564f" />
      <path d="M62 0c8 18 8 34-10 52M84 14c2 20-8 34-32 40M87 46c-12 8-22 10-35 10M86 66c-12 2-24-2-34-8M70 86c-2-12-8-20-18-26" fill="none" stroke="#54403a" strokeWidth="1.400" />
      <path d="M2 4l6-2 4 3c8-3 18-2 24 0l8-3c6 14 6 34 0 48H8C-2 36 0 16 2 4z" fill="url(#face)" />
      <ellipse cx="7" cy="41" rx="8" ry="6" fill="#b05a48" opacity=".55" /><ellipse cx="38" cy="41" rx="8" ry="6" fill="#b05a48" opacity=".55" />
      <path d="M4 35c2-5 7-5 9 0M33 35c2-5 7-5 9 0M19 39c1 3 4 3 5 0 1 3 4 3 5 0" fill="none" stroke="#35231f" strokeWidth="1.600" />
      <path d="M8 49h36c2 6 4 30 6 39H2c-2-12 0-28 6-39z" fill="url(#belly)" /><path d="M8 49h36l1 3H7z" fill="#f8bd3c" />
      <path d="M3 52c4-4 6 4 3 12M45 46c5-4 6 10 2 18" stroke="#5e4840" strokeWidth="4" fill="none" />
    </svg>
  );
}

function Trash() {
  return (
    <svg viewBox="0 0 78 102" className="h-[102px] w-[78px]">
      <defs><linearGradient id="bin"><stop stopColor="#8b8e90" /><stop offset=".3" stopColor="#6a6d70" /><stop offset=".75" stopColor="#7f8284" /><stop offset="1" stopColor="#8f9294" /></linearGradient></defs>
      <path d="M1 14C5 4 73 4 77 14l-8 80c-2 8-58 8-60 0z" fill="#55585a" />
      <path d="M8 14l4-8 10-3 6-3 8 8 8-2 4-5 8 8 12 0 4 8-10 8H14z" fill="#e9e9ea" />
      <path d="M10 8l8 3-6 5zM22 10l9 8-6 3zM44 6l6 8-7 8zM62 10l6 6-8 6z" fill="#6b6e73" /><path d="M46 10l8 4-4 10-7-4z" fill="#3c5a93" />
      <path d="M26 12l8 2-5 5z" fill="#3fb8e0" /><path d="M34 16l7 3-6 6z" fill="#c9552c" />
      <path d="M1 14c8 12 68 12 76 0l-8 80c-2 8-58 8-60 0z" fill="url(#bin)" opacity=".95" />
      <path d="M10 90c8 8 50 8 58 0l0 4c-3 8-55 8-58 0z" fill="#a5a8aa" opacity=".6" />
    </svg>
  );
}

function Dock() {
  return (
    <div className="relative mx-auto flex h-[138px] w-[3258px] items-center rounded-[44px] border-2 border-[#3d3f43] bg-[linear-gradient(90deg,#141517_0%,#141517_13%,#131a30_18%,#121f42_21%,#131d38_26%,#131b26_33%,#14181a_44%,#161a26_56%,#181c28_62%,#151515_69%,#263a54_75%,#2b4668_77%,#16263c_80%,#141a22_83%,#141517_87%,#141517_100%)] pl-[3.500px] shadow-[0_0_110px_rgba(0,0,0,0.25)]">
      <Slot running><Tile className=""><Finder /></Tile></Slot>
      <Slot><Tile className="bg-linear-to-b from-[#b9bbbc] to-[#adadae]"><Launchpad /></Tile></Slot>
      <Slot><Tile className="bg-white"><SlackLogo className="h-[61px] w-[61px]" /></Tile></Slot>
      <Slot running><Tile className="bg-[#2c3e75]"><Mattermost className="h-[68px] w-[68px]" color="#fff" /></Tile></Slot>
      <Slot><Tile className="bg-linear-to-b from-[#7983f2] to-[#5561ec]"><FaDiscord className="h-[64px] w-[64px] text-white drop-shadow-[0_3px_4px_rgba(30,30,120,0.4)]" /></Tile></Slot>
      <Slot><Tile className="bg-linear-to-tr from-[#1b46c4] via-[#2058ef] to-[#4a8cf0] text-[24px] font-semibold tracking-[-0.700px] text-white">zoom</Tile></Slot>
      <Slot running><Tile className="bg-[#f6f6f6]"><ChromeLogo className="h-[78px] w-[78px]" /></Tile></Slot>
      <Slot><IntelliJ /></Slot>
      <Slot><Eclipse /></Slot>
      <Slot running><Spring /></Slot>
      <Slot running><Tile className="bg-white"><VsCode /></Tile></Slot>
      <Slot><MySql /></Slot>
      <Slot><Tile className="bg-[#468ee6]"><FaDocker className="h-[66px] w-[66px] text-white" /></Tile></Slot>
      <Slot>
        <Tile className="bg-white">
          <OfficeMark letter="X" badge="bg-[#34804b]">
            <svg viewBox="0 0 50 58" className="ml-[15px] h-[58px] w-[50px]"><rect width="50" height="58" rx="3" fill="#4fa56d" /><path d="M25 0h22a3 3 0 0 1 3 3v12H25z" fill="#68c28c" /><path d="M25 15h25v14H25z" fill="#4fa56d" /><path d="M0 29h25v14H0z" fill="#2c6a41" /><path d="M25 29h25v14H25z" fill="#3a7c49" /><path d="M0 43h50v12a3 3 0 0 1-3 3H3a3 3 0 0 1-3-3z" fill="#2d5c3a" /></svg>
          </OfficeMark>
        </Tile>
      </Slot>
      <Slot>
        <Tile className="bg-white">
          <OfficeMark letter="W" badge="bg-[#2654b5]">
            <svg viewBox="0 0 50 58" className="ml-[15px] h-[58px] w-[50px]"><rect width="50" height="58" rx="3" fill="#5ca1e8" /><path d="M0 15h50v14H0z" fill="#4079cf" /><path d="M0 29h50v14H0z" fill="#2b58b5" /><path d="M0 43h50v12a3 3 0 0 1-3 3H3a3 3 0 0 1-3-3z" fill="#1f3f8b" /></svg>
          </OfficeMark>
        </Tile>
      </Slot>
      <Slot>
        <Tile className="bg-white">
          <OfficeMark letter="P" badge="bg-[#bd4426]">
            <svg viewBox="0 0 58 58" className="ml-[7px] h-[58px] w-[58px]"><circle cx="29" cy="29" r="29" fill="#c95a3b" /><path d="M29 0a29 29 0 0 1 29 29H29z" fill="#ee9676" /><path d="M29 0v29H0A29 29 0 0 1 29 0z" fill="#dd7653" /></svg>
          </OfficeMark>
        </Tile>
      </Slot>
      <Slot>
        <Tile className="bg-[#f6e14c]">
          <svg viewBox="0 0 88 88" className="h-full w-full">
            <ellipse cx="44" cy="41" rx="34" ry="27" fill="#371d1e" /><path d="M24 60l-1 17 14-12z" fill="#371d1e" />
            <text x="44" y="50.500" textAnchor="middle" textLength="49" fontFamily="Inter" fontSize="21" fontWeight="800" fill="#f6e14c">TALK</text>
          </svg>
        </Tile>
      </Slot>
      <Slot>
        <Screen>
          <svg viewBox="0 0 68 68" className="h-full w-full" fill="none">
            <path d="M0 14h68M0 27h68M0 41h68M0 54h68M12 0v68M23 0v68M34 0v68M45 0v68M57 0v68" stroke="#35494a" strokeWidth="1" />
            <path d="M0 36l4 5 6 1 4-4 2-34 4 48 3-10 9-1 5-7c3-5 6-3 8 4l5 6 5-5 4 3 4 0" stroke="#8fe0cb" strokeWidth="1.500" />
            <circle cx="62" cy="42" r="6" fill="#57c6a8" opacity=".35" />
          </svg>
        </Screen>
      </Slot>
      <Slot>
        <Screen>
          <div className="flex items-center gap-[2px] pt-[4px] pl-[5px] font-['Liberation_Mono'] text-[19px] leading-none font-bold text-[#68dd4f]">$<span className="h-[19px] w-[10px] bg-[#357d22]" /></div>
        </Screen>
      </Slot>
      <Slot running><TextEdit /></Slot>
      <Slot><Tile className="bg-white"><HelpPen /></Tile></Slot>
      <Slot><Tile className="bg-linear-to-b from-[#d5dfe6] to-[#8e8d8b]"><Gear /></Tile></Slot>
      <div className="mr-[24px] ml-[27px] h-[102px] w-[2px] bg-[#4a505a]" />
      <Slot><Tile className="bg-linear-to-b from-[#d7d8d7] to-[#bfbfbe]"><Calculator /></Tile></Slot>
      <Slot>
        <Tile className="bg-linear-to-b from-[#48a6f0] to-[#2458d8]">
          <svg viewBox="0 0 88 88" className="h-full w-full" stroke="#fff" strokeWidth="7.500" strokeLinecap="round"><path d="M48 20L30 52M39 20l27 47M17 54h54M24 63l-2 4" /></svg>
        </Tile>
      </Slot>
      <Slot><Tile className=""><Squirrel /></Tile></Slot>
      <div className="ml-[26px] h-[102px] w-[2px] bg-[#4a4c4f]" />
      <div className="relative mb-[11px] ml-[33px] flex h-[12px] w-[98px] items-center justify-end gap-[3px] bg-[#1f2122] pr-[2px]">
        <span className="h-[2px] w-[56px] bg-[#8f9194]" />
        <span className="h-[9px] w-[19px] rounded-full bg-[#9fb6ef]" />
        <span className="h-[2px] w-[8px] bg-[#5d6f99]" />
        <span className="absolute top-[24px] right-px flex h-[32px] w-[32px] items-center justify-center rounded-[7px] bg-[#f6f6f6]"><ChromeLogo className="h-[29px] w-[29px]" /></span>
      </div>
      <div className="ml-[30px] pb-[12px]"><Trash /></div>
    </div>
  );
}

export default function App() {
  return (
    <div className="flex h-[2234px] w-[3456px] flex-col overflow-hidden bg-black font-['Inter','Noto_Sans_CJK_KR',sans-serif]">
      <MenuBar />
      <div className="flex h-[2006px] shrink-0 flex-col overflow-hidden rounded-[22px] bg-[#3c3c3c]">
        <TabStrip />
        <Toolbar />
        <BookmarksBar />
        <div className="flex flex-1 flex-col bg-white">
          <SiteHeader />
          <ModifyForm />
          <SiteFooter />
        </div>
      </div>
      <div className="h-[152px] shrink-0 bg-[linear-gradient(180deg,#000_0px,#000_6px,transparent_40px),linear-gradient(90deg,#000_0%,#000_17.200%,#3d7fc4_17.350%,#000_17.500%,#000_18.300%,#5f8ed6_18.500%,#04103c_18.700%,#020e3a_27%,#020714_34%,#0a0d14_50%,#0e1730_63.500%,#000_64%,#000_72.400%,#c98b5a_72.600%,#a9c7ee_73.200%,#3f76c2_75%,#04142e_79%,#010204_84%,#000_100%)] pt-[4px]">
        <Dock />
      </div>
    </div>
  );
}
